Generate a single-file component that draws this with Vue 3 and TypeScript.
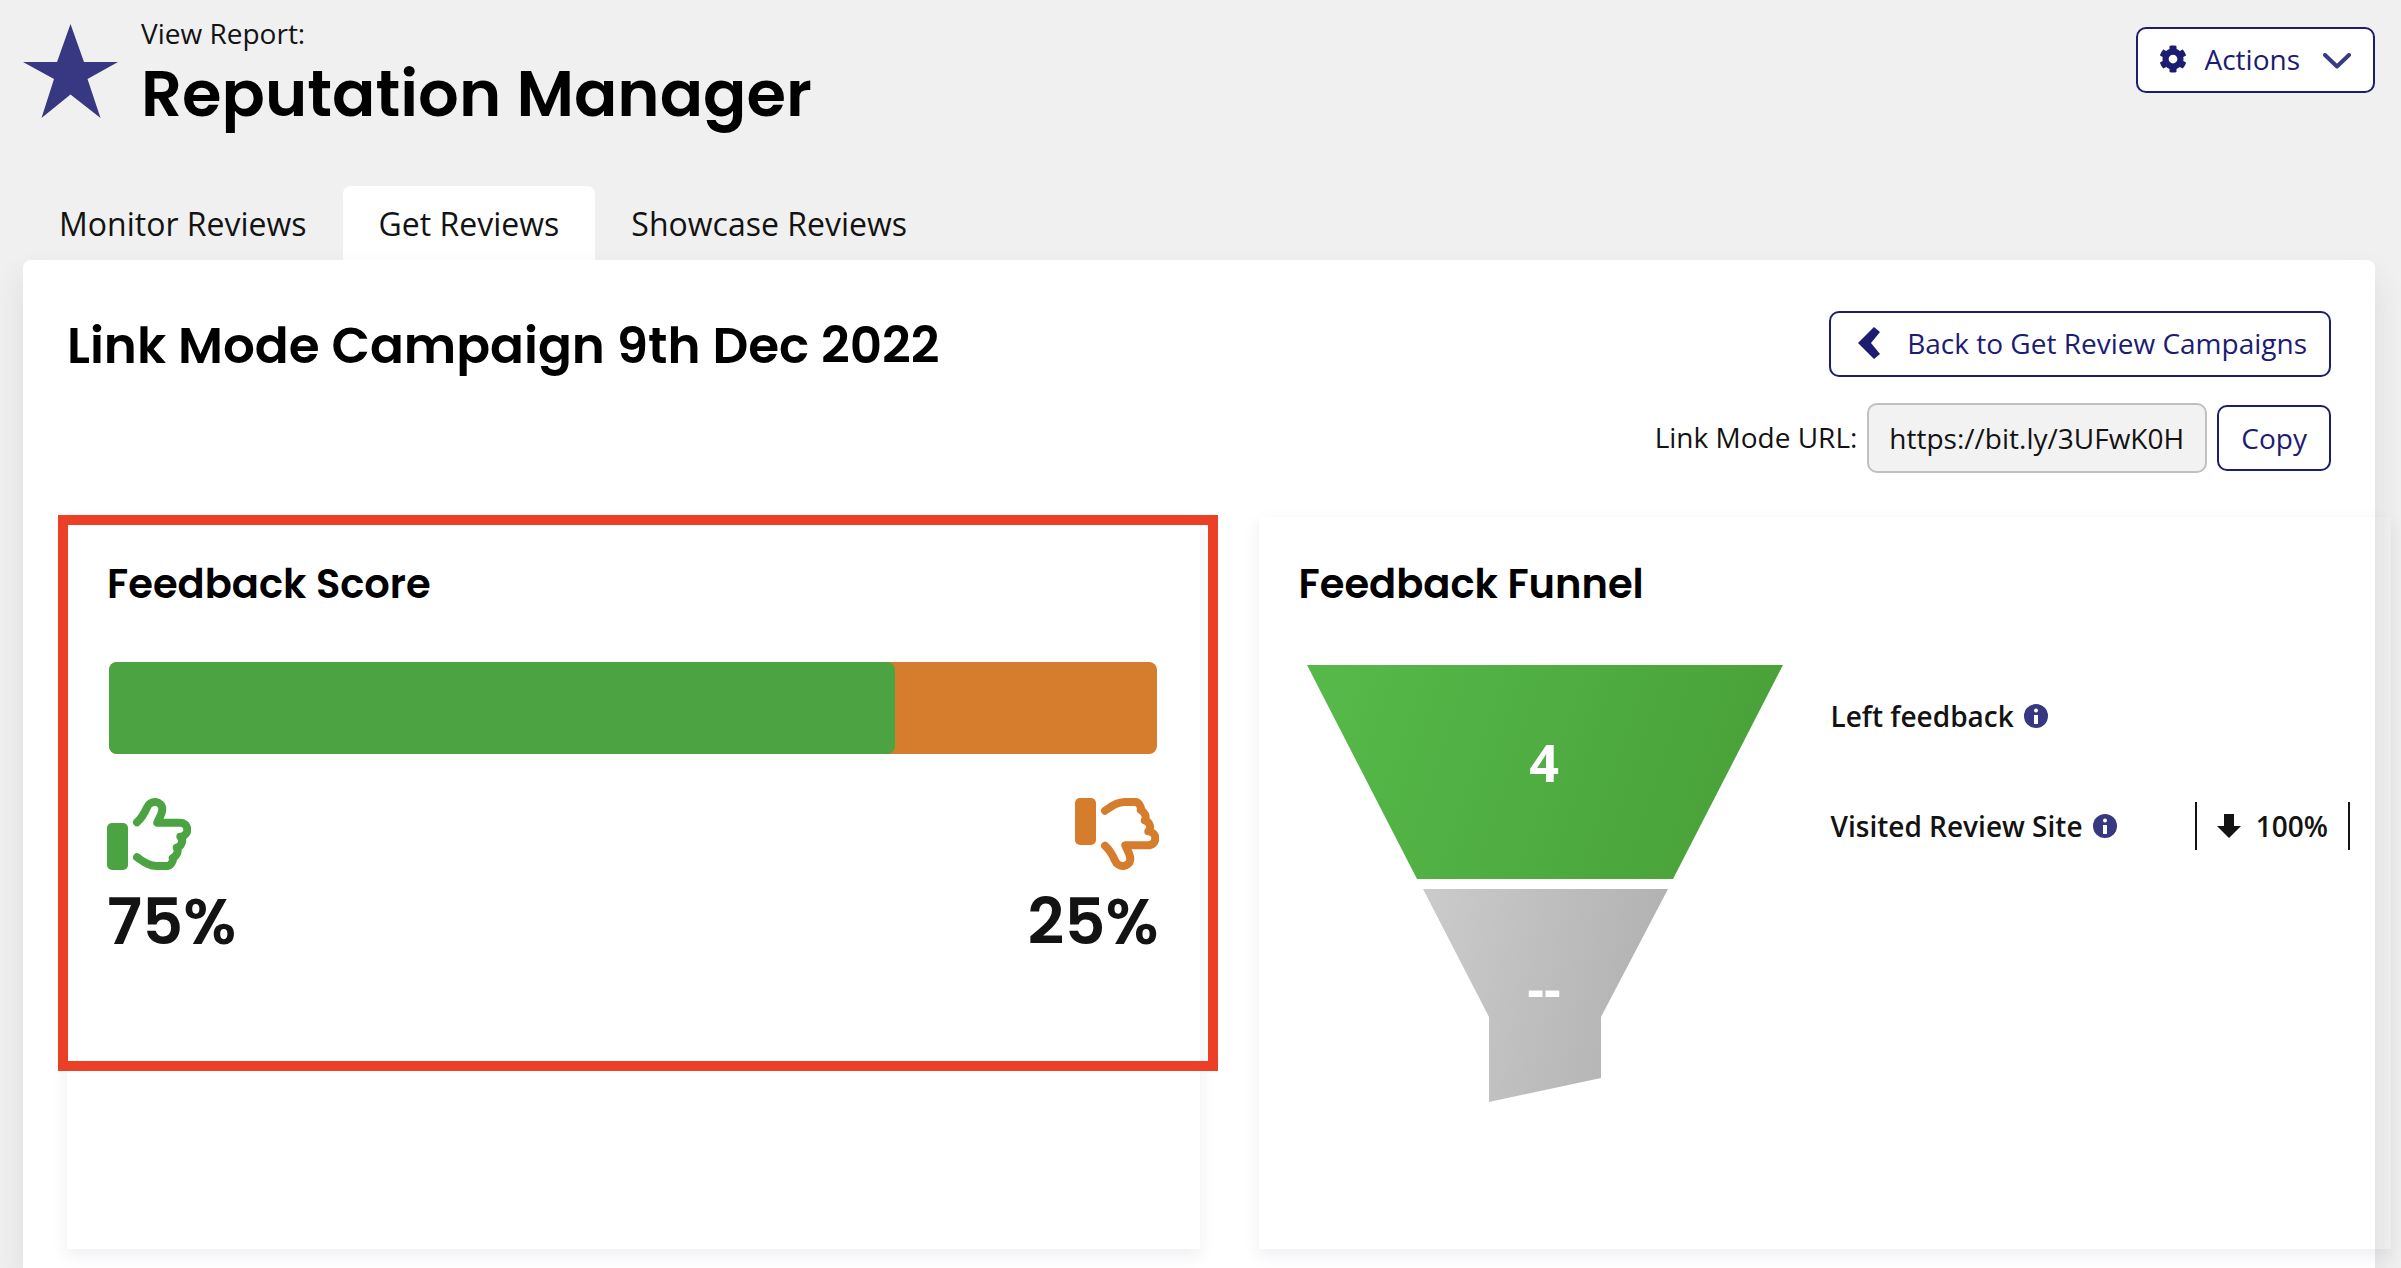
<script setup lang="ts">
interface Tab {
  label: string
  active: boolean
}

const tabs: Tab[] = [
  { label: 'Monitor Reviews', active: false },
  { label: 'Get Reviews', active: true },
  { label: 'Showcase Reviews', active: false },
]

const linkUrl = 'https://bit.ly/3UFwK0H'
const positive = 75
const negative = 25

const thumbPath =
  'M30 24.3C36 19 38 14 40 9.5C43 1.5 55 2.5 55.3 11C55.3 16 52 20 50.3 24.7H72.5C78 24.7 80.3 28 80.3 32C80.3 35.5 77 38.5 73.3 38.7C77 42 74.5 48.5 69.8 49.7C72 53.5 69.5 58 65.7 60C67 63 63 68 61 68H49.7C42 68 37 64 30 59.3'
</script>

<template>
  <div class="page">
    <header class="header">
      <svg class="star" viewBox="0 0 95 94" aria-hidden="true">
        <path d="M47.5 0L61 38H95L64.5 55L77.5 94L47.5 70.5L18.5 94L31 55L0 38H34Z" fill="#373782" />
      </svg>
      <div class="heading">
        <p class="eyebrow">View Report:</p>
        <h1>Reputation Manager</h1>
      </div>
      <button class="btn actions" type="button">
        <svg class="gear" viewBox="0 0 512 512" aria-hidden="true">
          <path fill="currentColor" d="M487.4 315.7l-42.6-24.6c4.3-23.2 4.3-47 0-70.2l42.6-24.6c4.9-2.8 7.1-8.6 5.5-14-11.1-35.6-30-67.8-54.7-94.6-3.8-4.1-10-5.1-14.8-2.3L380.8 110c-17.9-15.4-38.5-27.3-60.8-35.1V25.8c0-5.6-3.9-10.5-9.4-11.7-36.7-8.2-74.3-7.8-109.2 0-5.5 1.2-9.4 6.1-9.4 11.7V75c-22.2 7.9-42.8 19.8-60.8 35.1L88.7 85.5c-4.9-2.8-11-1.9-14.8 2.3-24.7 26.7-43.6 58.9-54.7 94.6-1.7 5.4.6 11.2 5.5 14L67.3 221c-4.3 23.2-4.3 47 0 70.2l-42.6 24.6c-4.9 2.8-7.1 8.6-5.5 14 11.1 35.6 30 67.8 54.7 94.6 3.8 4.1 10 5.1 14.8 2.3l42.6-24.6c17.9 15.4 38.5 27.3 60.8 35.1v49.2c0 5.6 3.9 10.5 9.4 11.7 36.7 8.2 74.3 7.8 109.2 0 5.5-1.2 9.4-6.1 9.4-11.7v-49.2c22.2-7.9 42.8-19.8 60.8-35.1l42.6 24.6c4.9 2.8 11 1.9 14.8-2.3 24.7-26.7 43.6-58.9 54.7-94.6 1.5-5.5-.7-11.3-5.6-14.1zM256 336c-44.1 0-80-35.9-80-80s35.9-80 80-80 80 35.9 80 80-35.9 80-80 80z" />
        </svg>
        <span>Actions</span>
        <svg class="caret" viewBox="0 0 28 16" aria-hidden="true">
          <path d="M2 2L14 13.5L26 2" fill="none" stroke="#3a3a82" stroke-width="4" stroke-linecap="round" stroke-linejoin="round" />
        </svg>
      </button>
    </header>

    <nav class="tabs">
      <a v-for="tab in tabs" :key="tab.label" href="#" class="tab" :class="{ active: tab.active }">{{ tab.label }}</a>
    </nav>

    <main class="panel">
      <div class="top">
        <h2>Link Mode Campaign 9th Dec 2022</h2>
        <div class="tools">
          <a class="btn back" href="#">
            <svg class="chevron" viewBox="0 0 22 32" aria-hidden="true">
              <path d="M16 0L22 5L13 16L22 27L16 32L0 16Z" fill="currentColor" />
            </svg>
            <span>Back to Get Review Campaigns</span>
          </a>
          <div class="url">
            <label for="link-url">Link Mode URL:</label>
            <input id="link-url" type="text" readonly :value="linkUrl" />
            <button class="btn copy" type="button">Copy</button>
          </div>
        </div>
      </div>

      <div class="cards">
        <section class="card">
          <h3>Feedback Score</h3>
          <div class="bar">
            <div class="bar-fill" :style="{ width: positive + '%' }"></div>
          </div>
          <div class="scores">
            <div class="score up">
              <svg viewBox="0 0 84 72" aria-hidden="true">
                <rect x="0" y="25" width="21" height="47" rx="5" fill="currentColor" />
                <path :d="thumbPath" />
              </svg>
              <strong>{{ positive }}%</strong>
            </div>
            <div class="score down">
              <svg viewBox="0 0 84 72" aria-hidden="true">
                <g transform="matrix(1 0 0 -1 0 72)">
                  <rect x="0" y="25" width="21" height="47" rx="5" fill="currentColor" />
                  <path :d="thumbPath" />
                </g>
              </svg>
              <strong>{{ negative }}%</strong>
            </div>
          </div>
          <div class="highlight"></div>
        </section>

        <section class="card">
          <h3>Feedback Funnel</h3>
          <div class="funnel">
            <svg class="funnel-chart" viewBox="0 0 476 437" role="img" aria-label="Feedback funnel">
              <defs>
                <linearGradient id="left-grad" x1="0" y1="0" x2="1" y2="0.15">
                  <stop offset="0" stop-color="#56ba4a" />
                  <stop offset="1" stop-color="#49a239" />
                </linearGradient>
                <linearGradient id="visited-grad" x1="0" y1="0" x2="1" y2="0.15">
                  <stop offset="0" stop-color="#cbcbcb" />
                  <stop offset="1" stop-color="#b2b2b2" />
                </linearGradient>
              </defs>
              <path d="M0 0H476L366 214H110Z" fill="url(#left-grad)" />
              <path d="M116 224H361L294 352V413L182 437V352Z" fill="url(#visited-grad)" />
              <text x="237" y="117">4</text>
              <text x="237" y="343">--</text>
            </svg>
            <ul class="stages">
              <li>
                <span>Left feedback</span>
                <svg class="info" viewBox="0 0 24 24" aria-hidden="true">
                  <circle cx="12" cy="12" r="12" fill="#373782" />
                  <circle cx="12" cy="6.5" r="2" fill="#fff" />
                  <path d="M10 11H14V20H10Z" fill="#fff" />
                </svg>
              </li>
              <li>
                <span>Visited Review Site</span>
                <svg class="info" viewBox="0 0 24 24" aria-hidden="true">
                  <circle cx="12" cy="12" r="12" fill="#373782" />
                  <circle cx="12" cy="6.5" r="2" fill="#fff" />
                  <path d="M10 11H14V20H10Z" fill="#fff" />
                </svg>
                <span class="drop">
                  <svg class="arrow" viewBox="0 0 24 24" aria-hidden="true">
                    <path d="M7 0H17V12H24L12 24L0 12H7Z" fill="currentColor" />
                  </svg>
                  100%
                </span>
              </li>
            </ul>
          </div>
        </section>
      </div>
    </main>
  </div>
</template>

<style>
body {
  margin: 0;
  background: #f0f0f0;
}
</style>

<style scoped>
* {
  box-sizing: border-box;
}

.page {
  display: flex;
  flex-direction: column;
  min-height: 100vh;
  padding: 0 26px 0 23px;
  overflow: hidden;
  background: #f0f0f0;
  color: #131313;
  font-family: "Open Sans", "Noto Sans", sans-serif;
  font-size: 28px;
  line-height: 40px;
}

h1,
h2,
h3,
p,
ul {
  margin: 0;
  padding: 0;
}

h1,
h2,
h3 {
  color: #000;
  font-family: Poppins, Inter, sans-serif;
  font-weight: 600;
}

.header {
  display: flex;
  align-items: flex-start;
  height: 186px;
}

.star {
  width: 95px;
  height: 94px;
  margin: 24px 23px 0 0;
}

.heading {
  flex: 1;
  padding-top: 13px;
}

h1 {
  font-size: 64px;
  line-height: 82px;
}

.btn {
  display: flex;
  align-items: center;
  height: 66px;
  border: 2px solid #1c1c72;
  border-radius: 10px;
  background: #fff;
  color: #1c1c72;
  font: inherit;
  text-decoration: none;
  white-space: nowrap;
}

.actions {
  gap: 17px;
  margin-top: 27px;
  padding: 0 22px 2px 21px;
}

.gear {
  width: 28px;
  height: 28px;
}

.caret {
  width: 28px;
  height: 16px;
  margin: 4px 0 0 6px;
}

.tabs {
  display: flex;
}

.tab {
  height: 74px;
  padding: 0 36px;
  border-radius: 8px 8px 0 0;
  color: #131313;
  font-size: 32px;
  line-height: 76px;
  text-decoration: none;
}

.tab.active {
  background: #fff;
}

.panel {
  flex: 1;
  padding: 51px 44px 19px;
  border-radius: 8px 8px 0 0;
  background: #fff;
  box-shadow: 0 16px 32px rgba(55, 55, 80, 0.1);
}

.top {
  display: flex;
  justify-content: space-between;
  height: 206px;
}

h2 {
  font-size: 50px;
  line-height: 70px;
}

.tools {
  display: flex;
  flex-direction: column;
  align-items: flex-end;
  gap: 26px;
}

.back {
  gap: 27px;
  padding: 0 22px 2px 27px;
}

.chevron {
  width: 22px;
  height: 32px;
}

.url {
  display: flex;
  align-items: center;
  gap: 10px;
}

label {
  padding-bottom: 3px;
}

input {
  width: 340px;
  height: 70px;
  padding: 0 20px;
  border: 2px solid #c0c0c0;
  border-radius: 10px;
  background: #f2f2f2;
  color: #131313;
  font: inherit;
}

.copy {
  padding: 0 22px;
}

.cards {
  display: grid;
  grid-template-columns: 1fr 1fr;
  gap: 59px;
  margin-right: -60px;
}

.card {
  position: relative;
  min-height: 732px;
  padding: 37px 41px 38px 40px;
  box-shadow: 0 6px 16px rgba(40, 40, 90, 0.08);
}

h3 {
  font-size: 40px;
  line-height: 60px;
}

.bar {
  height: 92px;
  margin: 48px 2px 0;
  border-radius: 8px;
  background: #d67d2d;
}

.bar-fill {
  height: 100%;
  border-radius: 8px;
  background: #4ca341;
}

.scores {
  display: flex;
  justify-content: space-between;
  margin-top: 44px;
}

.score {
  display: flex;
  flex-direction: column;
}

.score svg {
  width: 84px;
  height: 72px;
}

.score path {
  fill: none;
  stroke: currentColor;
  stroke-width: 8px;
  stroke-linecap: round;
  stroke-linejoin: round;
}

.score.up {
  color: #4ca341;
}

.score.down {
  align-items: flex-end;
  color: #d67d2d;
}

.score strong {
  margin-top: 12px;
  color: #131313;
  font-family: Poppins, Inter, sans-serif;
  font-size: 64px;
  font-weight: 600;
  line-height: 80px;
}

.highlight {
  position: absolute;
  top: -2px;
  right: -18px;
  left: -9px;
  height: 556px;
  border: 10px solid #eb4026;
}

.funnel {
  display: flex;
  gap: 48px;
  margin: 51px 0 0 8px;
}

.funnel-chart {
  flex: none;
  width: 476px;
  height: 437px;
}

.funnel-chart text {
  fill: #fff;
  font-family: "Open Sans", "Noto Sans", sans-serif;
  font-size: 52px;
  font-weight: 700;
  text-anchor: middle;
}

.stages {
  flex: 1;
  list-style: none;
  font-weight: 600;
}

.stages li {
  display: flex;
  align-items: center;
  gap: 10px;
  height: 48px;
  margin: 27px 0 62px;
}

.info {
  width: 24px;
  height: 24px;
}

.drop {
  display: flex;
  align-items: center;
  gap: 15px;
  height: 48px;
  margin-left: auto;
  padding: 0 20px;
  border: solid #131313;
  border-width: 0 2px;
}

.arrow {
  width: 24px;
  height: 24px;
}
</style>
